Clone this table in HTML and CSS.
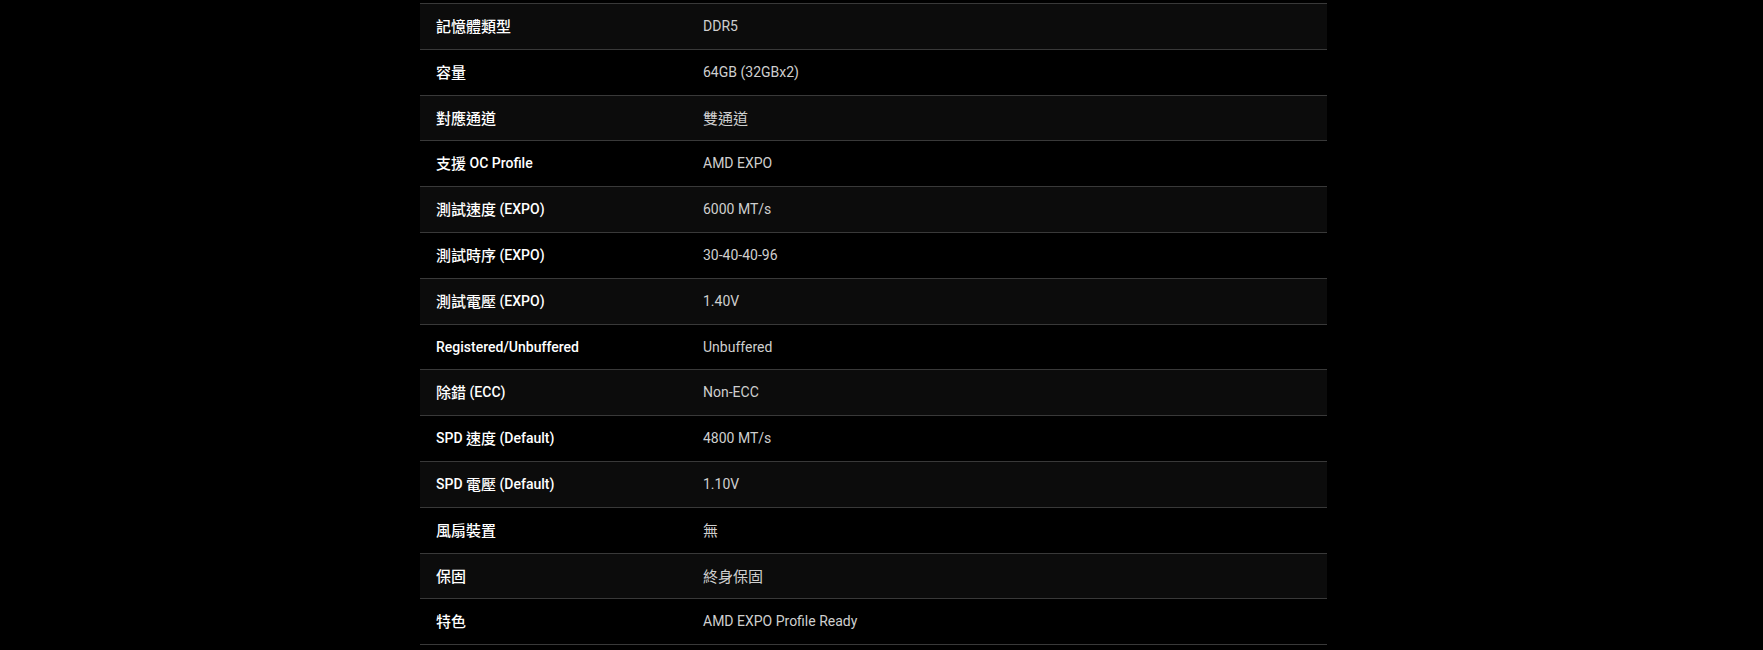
FILE: index.html
```html
<!DOCTYPE html>
<html lang="zh-Hant">
<head>
<meta charset="utf-8">
<title>規格</title>
<link rel="stylesheet" href="styles.css">
</head>
<body>
<div class="page">
  <div class="spec">
    <div class="row"><div class="key"><span class="zh">記憶體類型</span></div><div class="val">DDR5</div></div>
    <div class="row"><div class="key"><span class="zh">容量</span></div><div class="val">64GB (32GBx2)</div></div>
    <div class="row"><div class="key"><span class="zh">對應通道</span></div><div class="val"><span class="zh">雙通道</span></div></div>
    <div class="row"><div class="key"><span class="zh">支援</span> OC Profile</div><div class="val">AMD EXPO</div></div>
    <div class="row"><div class="key"><span class="zh">測試速度</span> (EXPO)</div><div class="val">6000 MT/s</div></div>
    <div class="row"><div class="key"><span class="zh">測試時序</span> (EXPO)</div><div class="val">30-40-40-96</div></div>
    <div class="row"><div class="key"><span class="zh">測試電壓</span> (EXPO)</div><div class="val">1.40V</div></div>
    <div class="row"><div class="key">Registered/Unbuffered</div><div class="val">Unbuffered</div></div>
    <div class="row"><div class="key"><span class="zh">除錯</span> (ECC)</div><div class="val">Non-ECC</div></div>
    <div class="row"><div class="key">SPD <span class="zh">速度</span> (Default)</div><div class="val">4800 MT/s</div></div>
    <div class="row"><div class="key">SPD <span class="zh">電壓</span> (Default)</div><div class="val">1.10V</div></div>
    <div class="row"><div class="key"><span class="zh">風扇裝置</span></div><div class="val"><span class="zh">無</span></div></div>
    <div class="row"><div class="key"><span class="zh">保固</span></div><div class="val"><span class="zh">終身保固</span></div></div>
    <div class="row"><div class="key"><span class="zh">特色</span></div><div class="val">AMD EXPO Profile Ready</div></div>
  </div>
</div>
</body>
</html>
```

FILE: styles.css
```css
html, body {
  margin: 0;
  padding: 0;
  background: #000;
}
body {
  font-family: "Roboto", "Noto Sans CJK TC", sans-serif;
  font-size: 14px;
  -webkit-font-smoothing: antialiased;
}
.page {
  padding: 3px 0 0 420px;
}
.spec {
  width: 907px;
  border-top: 1px solid #393939;
}
.row {
  display: grid;
  grid-template-columns: 267px 1fr;
  border-bottom: 1px solid #393939;
}
.row:nth-child(odd) {
  background: #0c0c0c;
}
.key, .val {
  padding: 12px 16px;
  height: 20.8px;
  line-height: 20.8px;
  white-space: nowrap;
}
.key {
  color: #fff;
  font-weight: 500;
}
.val {
  color: #cfcfcf;
  font-weight: 400;
}
.zh {
  font-family: "Noto Sans CJK TC", sans-serif;
  font-size: 15px;
  line-height: 19px;
  vertical-align: top;
}
```
